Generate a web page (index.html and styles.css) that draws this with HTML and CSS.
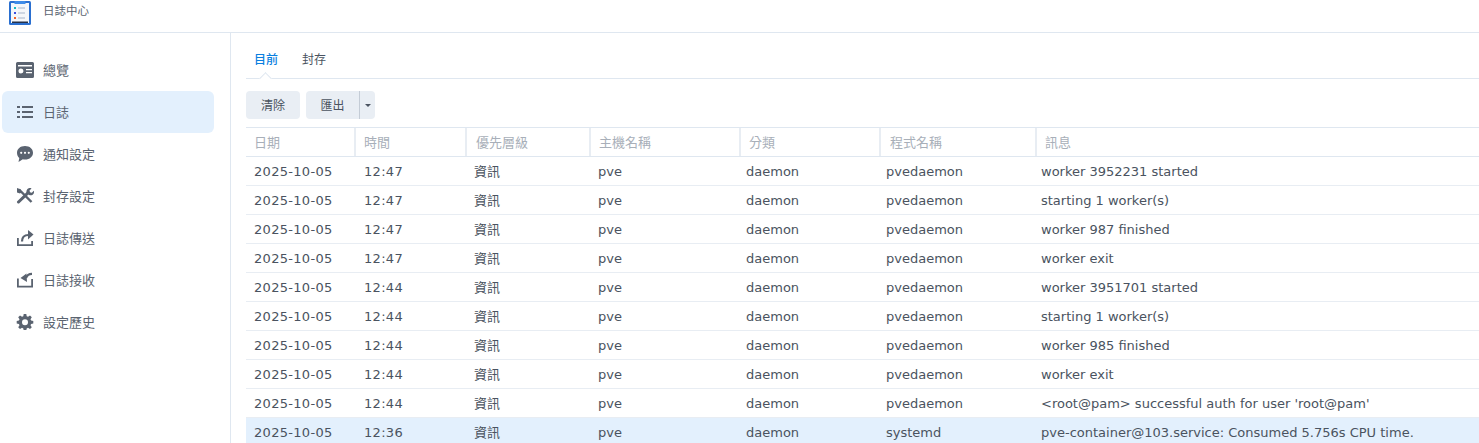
FILE: index.html
```html
<!DOCTYPE html>
<html lang="zh-Hant">
<head>
<meta charset="utf-8">
<title>日誌中心</title>
<link rel="stylesheet" href="styles.css">
</head>
<body>
<header class="topbar">
  <svg class="logo" viewBox="0 0 22 24" width="22" height="24">
    <rect x="0" y="0" width="22" height="24" rx="1.500" fill="#2a6fd0"/>
    <rect x="2" y="2" width="18" height="20" fill="#f4f7fa"/>
    <rect x="3" y="20.500" width="16" height="1.500" fill="#24324c"/>
    <rect x="5.500" y="0" width="11" height="3" fill="#3f8ce8"/>
    <rect x="5" y="6" width="2" height="2" fill="#14b8c4"/>
    <rect x="5" y="11" width="2" height="2" fill="#3a4fe0"/>
    <rect x="5" y="16" width="2" height="2" fill="#f0622a"/>
    <rect x="9" y="6" width="7" height="2" fill="#cdd6e2"/>
    <rect x="9" y="11" width="7" height="2" fill="#cdd6e2"/>
    <rect x="9" y="16" width="7" height="2" fill="#cdd6e2"/>
  </svg>
  <span class="app-title">日誌中心</span>
</header>
<div class="body-wrap">
  <nav class="sidebar">
    <a class="nav-item"><svg class="nav-icon" viewBox="0 0 18 16"><path fill="#5a6370" fill-rule="evenodd" d="M1.500 0h15A1.500 1.500 0 0 1 18 1.500v13a1.500 1.500 0 0 1-1.500 1.500h-15A1.500 1.500 0 0 1 0 14.500v-13A1.500 1.500 0 0 1 1.500 0zM2 3v1.500h14V3zm3 3.500a2.500 2.500 0 1 0 0 5 2.500 2.500 0 0 0 0-5zM10 7v1.300h6V7zm0 3v1.300h6V10z"/></svg><span class="nav-label">總覽</span></a>
    <a class="nav-item active"><svg class="nav-icon" viewBox="0 0 18 16"><path fill="#5a6370" d="M1 2h3v2H1zm5 0h11v2H6zM1 7h3v2H1zm5 0h11v2H6zM1 12h3v2H1zm5 0h11v2H6z"/></svg><span class="nav-label">日誌</span></a>
    <a class="nav-item"><svg class="nav-icon" viewBox="0 0 18 16"><path fill="#5a6370" fill-rule="evenodd" d="M9 0c4.700 0 8 2.900 8 6.800s-3.300 6.800-8 6.800c-.8 0-1.500-.1-2.200-.3L2.500 16l.8-3.900C1.800 10.900 1 9 1 6.800 1 2.900 4.300 0 9 0zM5.200 5.700a1.100 1.100 0 1 0 0 2.200 1.100 1.100 0 0 0 0-2.200zm3.800 0a1.100 1.100 0 1 0 0 2.200 1.100 1.100 0 0 0 0-2.200zm3.800 0a1.100 1.100 0 1 0 0 2.200 1.100 1.100 0 0 0 0-2.200z"/></svg><span class="nav-label">通知設定</span></a>
    <a class="nav-item"><svg class="nav-icon" viewBox="0 0 18 16"><path fill="none" stroke="#5a6370" stroke-width="2.400" d="M3 1.500l12.500 12.500"/><path fill="none" stroke="#5a6370" stroke-width="3" stroke-linecap="round" d="M2.500 14L12 4.800"/><path fill="#5a6370" d="M1 0l3.500 1.200 1 3-1.500 1.300-3-1zM12.200.6c1.200-.6 2.500-.6 3.300-.2l-2 2 .5 1.800 1.800.5 2-2c.4 1 .3 2.300-.4 3.300-.9 1.200-2.600 1.600-4.200.9L10.500 4.800c-.3-1.700.3-3.400 1.700-4.200z"/></svg><span class="nav-label">封存設定</span></a>
    <a class="nav-item"><svg class="nav-icon" viewBox="0 0 18 16"><path fill="none" stroke="#5a6370" stroke-width="1.800" d="M1.900 8v7.100h14.200V11"/><path fill="none" stroke="#5a6370" stroke-width="2.200" d="M6 11.500C6 7.500 8 5 12.500 5"/><path fill="#5a6370" d="M12 0l5.500 4.500L12 9.500z"/></svg><span class="nav-label">日誌傳送</span></a>
    <a class="nav-item"><svg class="nav-icon" viewBox="0 0 18 16"><path fill="none" stroke="#5a6370" stroke-width="1.800" d="M1.900 6.500v8.100h14.200V7"/><path fill="none" stroke="#5a6370" stroke-width="2.200" d="M16 1.800C13 1.800 11 3 10 6"/><path fill="#5a6370" d="M4.500 6l6-4.500.5 8.500z"/></svg><span class="nav-label">日誌接收</span></a>
    <a class="nav-item"><svg class="nav-icon" viewBox="0 0 18 16"><path fill="#5a6370" fill-rule="evenodd" d="M7.700 0h2.600l.4 2.200 1.300.6L14 1.500l1.800 1.800-1.300 1.900.6 1.400 2.200.4v2.600l-2.200.4-.6 1.300 1.300 2-1.800 1.800-2-1.300-1.300.6-.4 2.100H7.700l-.4-2.100-1.300-.6-2 1.300-1.800-1.800 1.300-2-.6-1.300L.7 9.600V7l2.200-.4.6-1.400-1.300-1.900L4 1.500l2 1.300 1.300-.6zM9 5.300a3 3 0 1 0 0 6 3 3 0 0 0 0-6z"/></svg><span class="nav-label">設定歷史</span></a>
  </nav>
  <main class="content">
    <div class="tabs">
      <span class="tab current">目前</span>
      <span class="tab">封存</span>
      <span class="tab-notch"></span>
    </div>
    <div class="toolbar">
      <button class="btn btn-clear"><span class="btn-label">清除</span></button>
      <div class="split">
        <button class="btn btn-export"><span class="btn-label">匯出</span></button>
        <button class="btn btn-caret"><span class="caret"></span></button>
      </div>
    </div>
    <div class="grid">
      <div class="row head">
        <div class="c c1">日期</div><div class="c c2">時間</div><div class="c c3">優先層級</div><div class="c c4">主機名稱</div><div class="c c5">分類</div><div class="c c6">程式名稱</div><div class="c c7">訊息</div>
      </div>
      <div class="row"><div class="c c1">2025-10-05</div><div class="c c2">12:47</div><div class="c c3">資訊</div><div class="c c4">pve</div><div class="c c5">daemon</div><div class="c c6">pvedaemon</div><div class="c c7">worker 3952231 started</div></div>
      <div class="row"><div class="c c1">2025-10-05</div><div class="c c2">12:47</div><div class="c c3">資訊</div><div class="c c4">pve</div><div class="c c5">daemon</div><div class="c c6">pvedaemon</div><div class="c c7">starting 1 worker(s)</div></div>
      <div class="row"><div class="c c1">2025-10-05</div><div class="c c2">12:47</div><div class="c c3">資訊</div><div class="c c4">pve</div><div class="c c5">daemon</div><div class="c c6">pvedaemon</div><div class="c c7">worker 987 finished</div></div>
      <div class="row"><div class="c c1">2025-10-05</div><div class="c c2">12:47</div><div class="c c3">資訊</div><div class="c c4">pve</div><div class="c c5">daemon</div><div class="c c6">pvedaemon</div><div class="c c7">worker exit</div></div>
      <div class="row"><div class="c c1">2025-10-05</div><div class="c c2">12:44</div><div class="c c3">資訊</div><div class="c c4">pve</div><div class="c c5">daemon</div><div class="c c6">pvedaemon</div><div class="c c7">worker 3951701 started</div></div>
      <div class="row"><div class="c c1">2025-10-05</div><div class="c c2">12:44</div><div class="c c3">資訊</div><div class="c c4">pve</div><div class="c c5">daemon</div><div class="c c6">pvedaemon</div><div class="c c7">starting 1 worker(s)</div></div>
      <div class="row"><div class="c c1">2025-10-05</div><div class="c c2">12:44</div><div class="c c3">資訊</div><div class="c c4">pve</div><div class="c c5">daemon</div><div class="c c6">pvedaemon</div><div class="c c7">worker 985 finished</div></div>
      <div class="row"><div class="c c1">2025-10-05</div><div class="c c2">12:44</div><div class="c c3">資訊</div><div class="c c4">pve</div><div class="c c5">daemon</div><div class="c c6">pvedaemon</div><div class="c c7">worker exit</div></div>
      <div class="row"><div class="c c1">2025-10-05</div><div class="c c2">12:44</div><div class="c c3">資訊</div><div class="c c4">pve</div><div class="c c5">daemon</div><div class="c c6">pvedaemon</div><div class="c c7">&lt;root@pam&gt; successful auth for user 'root@pam'</div></div>
      <div class="row selected"><div class="c c1">2025-10-05</div><div class="c c2">12:36</div><div class="c c3">資訊</div><div class="c c4">pve</div><div class="c c5">daemon</div><div class="c c6">systemd</div><div class="c c7">pve-container@103.service: Consumed 5.756s CPU time.</div></div>
    </div>
  </main>
</div>
</body>
</html>
```
FILE: styles.css
```css
* { box-sizing: border-box; }
html, body { margin: 0; height: 443px; overflow: hidden; background: #fff; }
body {
  font-family: "DejaVu Sans", "Noto Sans CJK TC", sans-serif;
  font-size: 13px;
  color: #4a5360;
}
.topbar {
  height: 33px;
  border-bottom: 1px solid #dfe7f0;
  display: flex;
  align-items: flex-start;
  padding: 1px 0 0 9px;
}
.logo { flex: none; width: 22px; height: 24px; }
.app-title {
  margin-left: 12px;
  font-size: 11.500px;
  line-height: 21px;
  color: #5a6370;
}
.body-wrap { display: flex; height: 410px; }
.sidebar {
  width: 231px;
  flex: none;
  border-right: 1px solid #dfe7f0;
  padding: 16px 16px 0 2px;
}
.nav-item {
  display: flex;
  align-items: center;
  height: 42px;
  padding-left: 14px;
  border-radius: 6px;
  color: #5a6370;
  font-size: 13px;
}
.nav-item.active { background: #e3f0fd; }
.nav-icon { width: 18px; height: 16px; flex: none; margin-right: 9px; }
.nav-label { padding-bottom: 2px; }
.content { flex: 1; min-width: 0; padding: 13px 0 0 15px; }
.tabs {
  position: relative;
  display: flex;
  height: 33px;
  border-bottom: 1px solid #dfe7f0;
  padding-left: 8px;
  gap: 24px;
  align-items: center;
  padding-bottom: 7px;
}
.tab { font-size: 12px; color: #4a5360; }
.tab.current { color: #0a7fe0; font-weight: 500; }
.tab-notch {
  position: absolute;
  left: 15px;
  bottom: -5px;
  width: 9px;
  height: 9px;
  background: #fff;
  border-left: 1px solid #dfe7f0;
  border-top: 1px solid #dfe7f0;
  transform: rotate(45deg);
}
.toolbar { display: flex; gap: 6px; margin-top: 12px; height: 28px; }
.btn {
  border: 0;
  height: 28px;
  background: #e9eef4;
  color: #4a5360;
  font-family: inherit;
  font-size: 12px;
  padding: 0;
}
.btn-label { display: block; padding-bottom: 2px; }
.btn-clear { width: 54px; border-radius: 4px; }
.split { display: flex; }
.btn-export { width: 54px; border-radius: 4px 0 0 4px; border-right: 1px solid #c4ccd6; }
.btn-caret { width: 15px; border-radius: 0 4px 4px 0; display: flex; align-items: center; justify-content: center; }
.caret { width: 0; height: 0; border-left: 3px solid transparent; border-right: 3px solid transparent; border-top: 3px solid #4a5360; }
.grid { margin-top: 8px; border-top: 1px solid #dfe7f0; }
.row {
  display: grid;
  grid-template-columns: 110px 111px 124px 150px 140px 156px 1fr;
  height: 29px;
  padding-top: 1px;
  align-items: start;
  border-bottom: 1px solid #e8edf3;
  white-space: nowrap;
}
.row.head { border-bottom: 1px solid #dfe7f0; padding-top: 0; color: #a8afb9; font-size: 13px; }
.row.selected { background: #e3f0fd; border-bottom-color: transparent; }
.c { min-width: 0; line-height: 27px; }
.c1, .c2 { padding-left: 8px; letter-spacing: .3px; }
.c3, .c4 { padding-left: 7px; }
.c5, .c6 { padding-left: 5px; }
.c7 { padding-left: 4px; }
.head .c { border-right: 2px solid #e8edf3; padding: 2px 0 0 8px; line-height: 26px; letter-spacing: 0; }
.head .c3, .head .c6 { padding-left: 9px; }
.head .c7 { border-right: 0; }
```
